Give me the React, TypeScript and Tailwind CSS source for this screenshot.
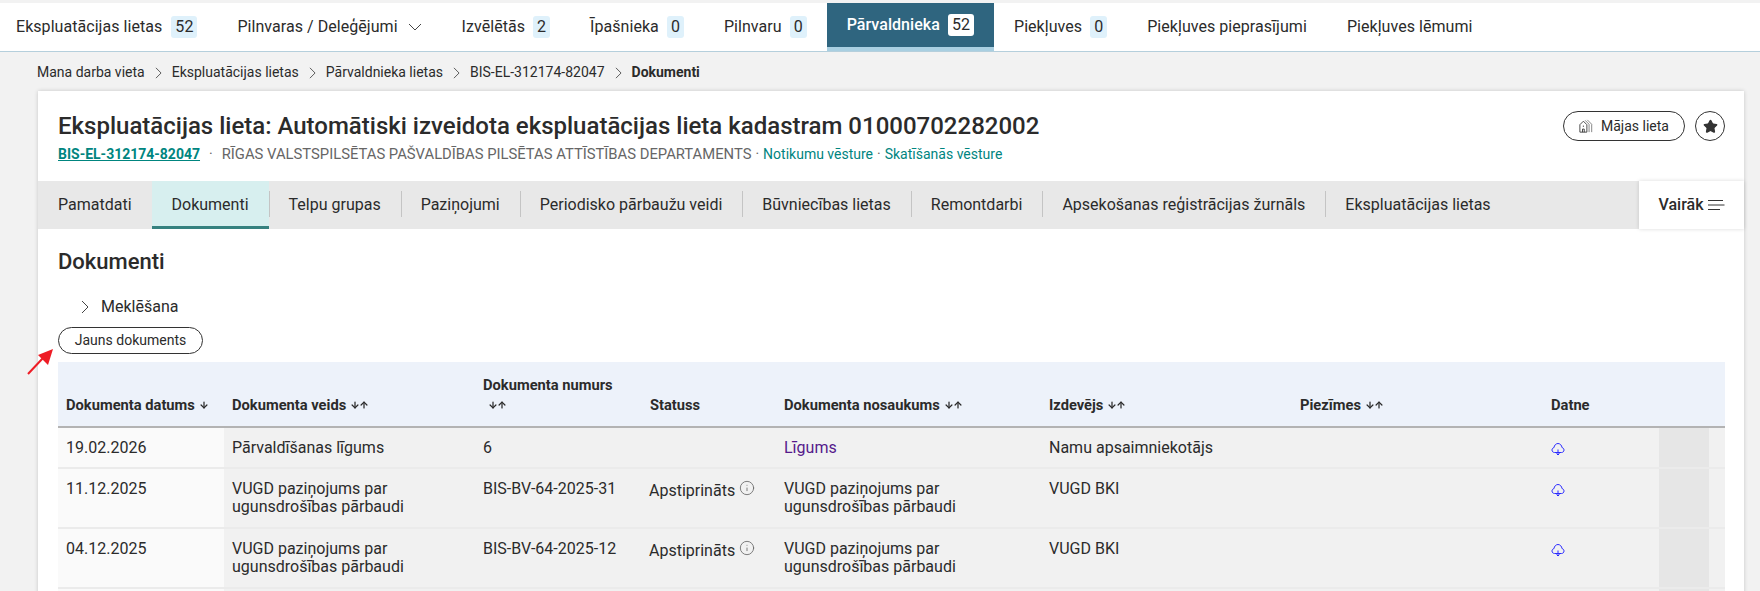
import React from 'react';
import { Info, Star, ArrowDown, ArrowUp } from 'lucide-react';

const navItems = [
    { label: 'Ekspluatācijas lietas', badge: '52' },
    { label: 'Pilnvaras / Deleģējumi', chevron: true },
    { label: 'Izvēlētās', badge: '2' },
    { label: 'Īpašnieka', badge: '0' },
    { label: 'Pilnvaru', badge: '0' },
    { label: 'Pārvaldnieka', badge: '52', active: true },
    { label: 'Piekļuves', badge: '0' },
    { label: 'Piekļuves pieprasījumi' },
    { label: 'Piekļuves lēmumi' },
];

const crumbs = ['Mana darba vieta', 'Ekspluatācijas lietas', 'Pārvaldnieka lietas', 'BIS-EL-312174-82047'];

const tabs = [
    'Pamatdati',
    'Dokumenti',
    'Telpu grupas',
    'Paziņojumi',
    'Periodisko pārbaužu veidi',
    'Būvniecības lietas',
    'Remontdarbi',
    'Apsekošanas reģistrācijas žurnāls',
    'Ekspluatācijas lietas',
];

const vugd = 'VUGD paziņojums par ugunsdrošības pārbaudi';

const rows = [
    { date: '19.02.2026', type: 'Pārvaldīšanas līgums', num: '6', status: '', name: 'Līgums', link: true, issuer: 'Namu apsaimniekotājs', h: 'h-[41px]' },
    { date: '11.12.2025', type: vugd, num: 'BIS-BV-64-2025-31', status: 'Apstiprināts', name: vugd, issuer: 'VUGD BKI', h: 'h-[60px]' },
    { date: '04.12.2025', type: vugd, num: 'BIS-BV-64-2025-12', status: 'Apstiprināts', name: vugd, issuer: 'VUGD BKI', h: 'h-[60px]' },
];

function SortArrows({ up = true }: { up?: boolean }) {
    return (
        <span className="inline-flex align-[-1px] ml-1">
            <ArrowDown className="w-[10px] h-[12px] -mr-[1px]" strokeWidth={3} />
            {up && <ArrowUp className="w-[10px] h-[12px]" strokeWidth={3} />}
        </span>
    );
}

// thin chevron, wider than the lucide one
function ThinChevron({ className }: { className: string }) {
    return (
        <svg viewBox="0 0 8 14" className={className} fill="none" stroke="#444444" strokeWidth="1">
            <path d="M1 1l6 6-6 6" />
        </svg>
    );
}

function CloudIcon() {
    return (
        <svg viewBox="0 0 14 14" className="w-[14px] h-[14px]" fill="none" stroke="#2a2aff" strokeWidth="1">
            <path d="M3.500 10.500C2 10.500 1 9.400 1 8c0-1.200.8-2.200 2-2.400C3.200 3.400 4.900 1.500 7 1.500s3.800 1.900 4 4.100c1.200.2 2 1.200 2 2.400 0 1.400-1 2.500-2.500 2.500Z" />
            <path d="M7 7.500v5.500M5.500 11.500 7 13l1.500-1.500" />
        </svg>
    );
}

function HouseIcon() {
    return (
        <svg viewBox="0 0 16 16" className="w-[14px] h-[14px]" fill="none" stroke="#333333" strokeWidth="1">
            <path d="M1 15V6.500L5 2.500 9 6.500V15Z" />
            <path d="M4 15v-3.500h2V15" />
            <path d="M5 7.500v1.500" />
            <path d="M7 1.500 11.500 6V15M9.500 1 14.500 6V15" stroke="#777777" />
        </svg>
    );
}

function Th({ children, w }: { children: React.ReactNode; w: string }) {
    return (
        <th className={`${w} px-2 pb-[11px] align-bottom text-left font-bold text-[14.7px] leading-[20px]`}>
            {children}
        </th>
    );
}

export default function App() {
    return (
        <div className="h-[591px] overflow-hidden bg-[#f2f2f2] pt-[3px] text-[#2b2b2b] font-['Roboto',sans-serif]">
            <nav className="flex h-[49px] bg-white border-b border-[#b5cfdc] text-[16px] tracking-[0.05px]">
                {navItems.map((item, i) => (
                    <div
                        key={item.label}
                        className={`flex items-center px-5 ${i === 0 ? 'pl-4 gap-[9px]' : 'gap-2'} ${item.chevron ? 'gap-[10px]' : ''} ${
                            item.active ? 'bg-[#2f657f] text-white font-medium border-b-4 border-[#a9cfe1] h-[48px]' : ''
                        }`}
                    >
                        <span>{item.label}</span>
                        {item.badge && (
                            <span
                                className={`flex h-[22px] items-center rounded-[3px] px-[4px] min-w-[17px] justify-center ${
                                    item.active ? 'bg-white text-[#2b2b2b] font-normal' : 'bg-[#dff1fb]'
                                }`}
                            >
                                {item.badge}
                            </span>
                        )}
                        {item.chevron && (
                            <svg viewBox="0 0 14 8" className="w-[14px] h-[8px]" fill="none" stroke="#444444" strokeWidth="1">
                                <path d="M1 1l6 6 6-6" />
                            </svg>
                        )}
                    </div>
                ))}
            </nav>

            <div className="flex items-center h-[39px] pt-[2px] pl-[37px] text-[14px]">
                {crumbs.map((c) => (
                    <React.Fragment key={c}>
                        <span>{c}</span>
                        <ThinChevron className="w-[7px] h-[12px] mx-[10px]" />
                    </React.Fragment>
                ))}
                <span className="font-bold">Dokumenti</span>
            </div>

            <main className="ml-[38px] mr-[16px] bg-white shadow-[0_0_4px_rgba(0,0,0,0.18)]">
                <header className="flex h-[90px] justify-between pl-5 pr-[19px] pt-[18px]">
                    <div>
                        <h1 className="text-[24px] leading-[34px] font-medium">
                            Ekspluatācijas lieta: Automātiski izveidota ekspluatācijas lieta kadastram 01000702282002
                        </h1>
                        <div className="flex items-center mt-[1px] text-[14px] leading-[20px]">
                            <a className="font-bold text-[#00857f] underline">BIS-EL-312174-82047</a>
                            <span className="mx-[9px] text-[#666666]">·</span>
                            <span className="text-[14.8px] text-[#666666]">RĪGAS VALSTSPILSĒTAS PAŠVALDĪBAS PILSĒTAS ATTĪSTĪBAS DEPARTAMENTS</span>
                            <span className="mx-[4px] text-[#666666]">·</span>
                            <a className="text-[#00857f]">Notikumu vēsture</a>
                            <span className="mx-[4px] text-[#666666]">·</span>
                            <a className="text-[#00857f]">Skatīšanās vēsture</a>
                        </div>
                    </div>
                    <div className="flex gap-[10px] mt-[2px]">
                        <button className="flex h-[30px] w-[122px] items-center justify-center gap-2 rounded-full border border-[#333333] text-[14px]">
                            <HouseIcon />
                            Mājas lieta
                        </button>
                        <button className="flex h-[30px] w-[30px] items-center justify-center rounded-full border border-[#333333]">
                            <Star className="w-[15px] h-[15px] fill-[#333333] text-[#333333]" />
                        </button>
                    </div>
                </header>

                <div className="flex h-[48px] bg-[#e8e8e8] text-[16px]">
                    {tabs.map((t, i) => (
                        <div
                            key={t}
                            className={`relative flex items-center px-5 ${
                                t === 'Dokumenti' ? 'bg-[#d7efef] border-b-[3px] border-[#35817f] pt-[3px]' : ''
                            }`}
                        >
                            {t}
                            {i > 1 && <span className="absolute left-0 top-[10px] h-[26px] w-px bg-[#c4c4c4]" />}
                        </div>
                    ))}
                    <div className="ml-auto flex w-[105px] items-center justify-center gap-[3px] bg-white font-medium shadow-[0_0_4px_rgba(0,0,0,0.15)]">
                        Vairāk
                        <svg viewBox="0 0 18 12" className="w-[18px] h-[12px]" stroke="#333333" strokeWidth="1">
                            <path d="M1 1.500H16M1 6H17.500M1 10.500H13" />
                        </svg>
                    </div>
                </div>

                <section className="relative px-5 pt-[20px]">
                    <h2 className="text-[22px] leading-[26px] font-medium">Dokumenti</h2>
                    <div className="flex items-center gap-[12px] h-[22px] mt-[21px] pl-[23px] text-[16px]">
                        <ThinChevron className="w-[8px] h-[14px]" />
                        Meklēšana
                    </div>
                    <button className="block h-[27px] w-[145px] mt-[9px] rounded-full border border-[#333333] text-[14px]">
                        Jauns dokuments
                    </button>
                    <svg viewBox="0 0 30 30" className="absolute left-[-13px] top-[117px] w-[30px] h-[30px]">
                        <path d="M3 28 18 12" stroke="#ee1c25" strokeWidth="2" />
                        <path d="M28 3 13 9 23 19Z" fill="#ee1c25" />
                    </svg>

                    <table className="mt-[8px] w-[1667px] table-fixed border-collapse text-[16px]">
                        <thead>
                            <tr className="h-[65px] bg-[#edf2fa] border-b-2 border-[#b3b3b3]">
                                <Th w="w-[166px]">Dokumenta datums<SortArrows up={false} /></Th>
                                <Th w="w-[251px]">Dokumenta veids<SortArrows /></Th>
                                <Th w="w-[167px]">
                                    Dokumenta numurs
                                    <br />
                                    <span className="pl-[1px]"><SortArrows /></span>
                                </Th>
                                <Th w="w-[134px]">Statuss</Th>
                                <Th w="w-[265px]">Dokumenta nosaukums<SortArrows /></Th>
                                <Th w="w-[251px]">Izdevējs<SortArrows /></Th>
                                <Th w="w-[251px]">Piezīmes<SortArrows /></Th>
                                <Th w="w-[116px]">Datne</Th>
                                <th className="w-[50px]" />
                                <th className="w-[16px]" />
                            </tr>
                        </thead>
                        <tbody>
                            {rows.map((r) => (
                                <tr key={r.date} className={`${r.h} bg-[#f1f1f1] border-b-2 border-[#ebebeb] align-top leading-[18px]`}>
                                    <td className="bg-[#fafafa] px-2 pt-[11px]">{r.date}</td>
                                    <td className="px-2 pt-[11px]">{r.type}</td>
                                    <td className="px-2 pt-[11px]">{r.num}</td>
                                    <td className="pl-[7px] pr-2 pt-[11px]">
                                        {r.status && (
                                            <span className="flex items-start gap-[4px]">
                                                <span className="pt-[2px]">{r.status}</span>
                                                <Info className="w-[16px] h-[16px] text-[#666666]" strokeWidth={1.25} />
                                            </span>
                                        )}
                                    </td>
                                    <td className="px-2 pt-[11px]">
                                        {r.link ? <a className="text-[#551a8b]">{r.name}</a> : r.name}
                                    </td>
                                    <td className="px-2 pt-[11px]">{r.issuer}</td>
                                    <td className="px-2 pt-[11px]" />
                                    <td className="px-2 pt-[14px]"><CloudIcon /></td>
                                    <td className="bg-[#e6e6e6]" />
                                    <td />
                                </tr>
                            ))}
                            <tr className="h-[30px] bg-[#f1f1f1]">
                                <td className="bg-[#fafafa]" />
                                <td colSpan={7} />
                                <td className="bg-[#e6e6e6]" />
                                <td />
                            </tr>
                        </tbody>
                    </table>
                </section>
            </main>
        </div>
    );
}
